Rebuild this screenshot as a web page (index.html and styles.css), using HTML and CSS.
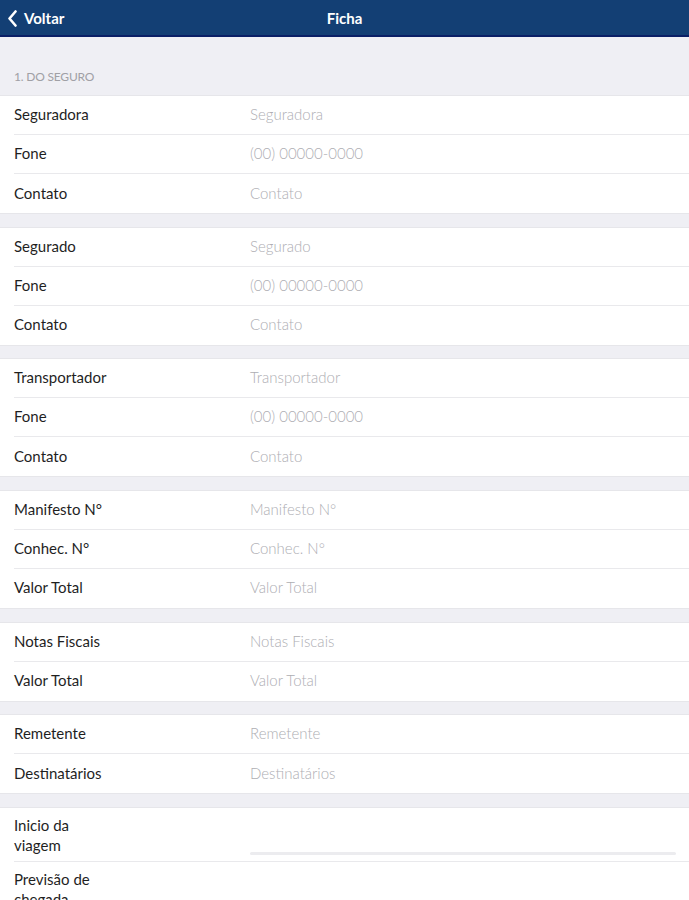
FILE: index.html
```html
<!DOCTYPE html>
<html lang="pt">
<head>
<meta charset="utf-8">
<title>Ficha</title>
<link rel="stylesheet" href="styles.css">
</head>
<body>
<header class="navbar">
  <a class="back" href="#">
    <svg class="chev" width="11" height="17" viewBox="0 0 11 17"><path d="M8.5 1.5 L2.5 8.5 L8.5 15.5" fill="none" stroke="#fff" stroke-width="2.6" stroke-linecap="round" stroke-linejoin="round"/></svg>
    <span>Voltar</span>
  </a>
  <h1 class="title">Ficha</h1>
</header>
<main class="content">
  <div class="section-title">1. DO SEGURO</div>
  <section class="group">
    <div class="row"><span class="label">Seguradora</span><span class="ph">Seguradora</span></div>
    <div class="row"><span class="label">Fone</span><span class="ph">(00) 00000-0000</span></div>
    <div class="row"><span class="label">Contato</span><span class="ph">Contato</span></div>
  </section>
  <section class="group">
    <div class="row"><span class="label">Segurado</span><span class="ph">Segurado</span></div>
    <div class="row"><span class="label">Fone</span><span class="ph">(00) 00000-0000</span></div>
    <div class="row"><span class="label">Contato</span><span class="ph">Contato</span></div>
  </section>
  <section class="group">
    <div class="row"><span class="label">Transportador</span><span class="ph">Transportador</span></div>
    <div class="row"><span class="label">Fone</span><span class="ph">(00) 00000-0000</span></div>
    <div class="row"><span class="label">Contato</span><span class="ph">Contato</span></div>
  </section>
  <section class="group">
    <div class="row"><span class="label">Manifesto N°</span><span class="ph">Manifesto N°</span></div>
    <div class="row"><span class="label">Conhec. N°</span><span class="ph">Conhec. N°</span></div>
    <div class="row"><span class="label">Valor Total</span><span class="ph">Valor Total</span></div>
  </section>
  <section class="group">
    <div class="row"><span class="label">Notas Fiscais</span><span class="ph">Notas Fiscais</span></div>
    <div class="row"><span class="label">Valor Total</span><span class="ph">Valor Total</span></div>
  </section>
  <section class="group">
    <div class="row"><span class="label">Remetente</span><span class="ph">Remetente</span></div>
    <div class="row"><span class="label">Destinatários</span><span class="ph">Destinatários</span></div>
  </section>
  <section class="group">
    <div class="row tall"><span class="label wrap">Inicio da viagem</span><span class="field"></span></div>
    <div class="row tall"><span class="label wrap">Previsão de chegada</span><span class="field"></span></div>
  </section>
</main>
</body>
</html>
```
FILE: styles.css
```css
* { box-sizing: border-box; }
html, body { margin: 0; padding: 0; }
body {
  width: 689px;
  height: 900px;
  overflow: hidden;
  background: #efeff4;
  font-family: Lato, "Open Sans", sans-serif;
  -webkit-font-smoothing: antialiased;
}
.navbar {
  position: relative;
  height: 37px;
  background: #133f74;
  border-bottom: 2px solid #0a1f66;
  display: flex;
  align-items: center;
  justify-content: center;
}
.back {
  position: absolute;
  left: 7px;
  top: 9px;
  display: flex;
  align-items: center;
  gap: 6px;
  color: #fff;
  text-decoration: none;
  font-size: 15px;
  font-weight: 700;
}
.chev { display: block; }
.title {
  margin: 0;
  color: #fff;
  font-size: 15px;
  font-weight: 700;
}
.content {
  display: flex;
  flex-direction: column;
}
.section-title {
  padding: 32px 14px 0;
  height: 58px;
  font-size: 12px;
  color: #a0a0a5;
  letter-spacing: -0.2px;
}
.group {
  background: #fff;
  margin-bottom: 12.65px;
  border-top: 1px solid #e6e6ea;
  border-bottom: 1px solid #e6e6ea;
}
.row {
  display: flex;
  align-items: center;
  height: 39px;
  padding-bottom: 2px;
  margin-left: 14px;
  border-bottom: 1px solid #e9e9ec;
}
.row:last-child { border-bottom: none; }
.label {
  width: 236px;
  flex: none;
  font-size: 15px;
  color: #1f1f1f;
}
.ph {
  font-size: 15px;
  font-weight: 300;
  color: #aeaeb3;
}
.row.tall {
  height: 54px;
  align-items: flex-start;
  padding-top: 7px;
  position: relative;
}
.label.wrap {
  width: 95px;
  line-height: 20px;
}
.field {
  position: absolute;
  left: 236px;
  right: 13px;
  top: 44px;
  height: 3px;
  background: #ececef;
  border-radius: 2px;
}
```
